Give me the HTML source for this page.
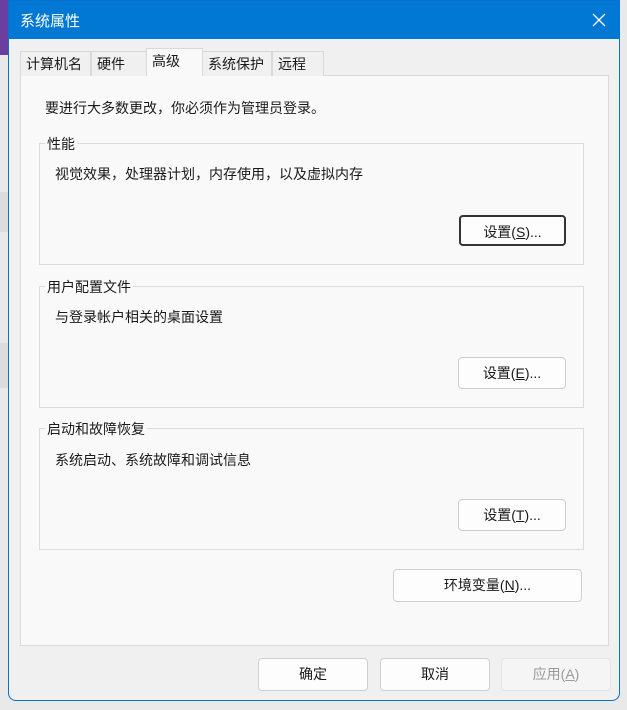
<!DOCTYPE html>
<html><head><meta charset="utf-8"><style>
*{box-sizing:border-box;margin:0;padding:0}
body{width:627px;height:710px;overflow:hidden;background:#e9e9e9;font-family:"Liberation Sans","Noto Sans CJK SC",sans-serif;font-size:14px;color:#1a1a1a;position:relative}
.a{position:absolute}
.dlg{left:8px;top:0;width:612px;height:701px;background:#f0f0f0;border:1px solid #0a6fd0;border-radius:0 0 8px 8px;overflow:hidden}
.tb{left:0;top:0;width:100%;height:38px;background:#0078d4;color:#fff;font-size:15px}
.tab{top:50px;height:25px;background:#f0f0f0;border:1px solid #d9d9d9;border-bottom:none;padding:2px 5px;font-size:14px}
.panel{left:11px;top:74px;width:589px;height:571px;background:#f9f9f9;border:1px solid #d9d9d9}
.gb{border:1px solid #dcdcdc}
.gl{background:#f9f9f9;padding:0 2px}
.btn{background:#fdfdfd;border:1px solid #cfcfcf;border-radius:4px;text-align:center;line-height:30px}
</style></head><body>
<div class="a" style="left:0;top:0;width:8px;height:55px;background:#6b3fa0"></div>
<div class="a" style="left:0;top:192px;width:8px;height:40px;background:#dcdcdc"></div>
<div class="a" style="left:0;top:343px;width:8px;height:45px;background:#dcdcdc"></div>
<div class="a dlg">
 <div class="a tb"><span class="a" style="left:11px;top:9px">系统属性</span>
  <svg class="a" style="left:583px;top:12px" width="14" height="14"><path d="M1 1L13 13M13 1L1 13" stroke="#fff" stroke-width="1.3"/></svg></div>
 <div class="a panel"></div>
 <div class="a tab" style="left:11px;width:71px">计算机名</div>
 <div class="a tab" style="left:82px;width:56px">硬件</div>
 <div class="a tab" style="left:137px;top:47px;height:28px;width:57px;background:#f9f9f9;border-color:#d9d9d9">高级</div>
 <div class="a tab" style="left:193px;width:70px">系统保护</div>
 <div class="a tab" style="left:263px;width:52px">远程</div>
 <div class="a" style="left:36px;top:97px">要进行大多数更改，你必须作为管理员登录。</div>

 <div class="a gb" style="left:30px;top:142px;width:545px;height:122px"></div>
 <div class="a gl" style="left:36px;top:133px">性能</div>
 <div class="a" style="left:46px;top:163px">视觉效果，处理器计划，内存使用，以及虚拟内存</div>
 <div class="a btn" style="left:450px;top:214px;width:107px;height:31px;border:2px solid #333">设置(<u>S</u>)...</div>

 <div class="a gb" style="left:30px;top:285px;width:545px;height:122px"></div>
 <div class="a gl" style="left:36px;top:276px">用户配置文件</div>
 <div class="a" style="left:46px;top:306px">与登录帐户相关的桌面设置</div>
 <div class="a btn" style="left:449px;top:356px;width:108px;height:32px">设置(<u>E</u>)...</div>

 <div class="a gb" style="left:30px;top:427px;width:545px;height:122px"></div>
 <div class="a gl" style="left:36px;top:418px">启动和故障恢复</div>
 <div class="a" style="left:46px;top:449px">系统启动、系统故障和调试信息</div>
 <div class="a btn" style="left:449px;top:498px;width:108px;height:32px">设置(<u>T</u>)...</div>

 <div class="a btn" style="left:384px;top:568px;width:189px;height:33px">环境变量(<u>N</u>)...</div>

 <div class="a btn" style="left:249px;top:657px;width:110px;height:33px">确定</div>
 <div class="a btn" style="left:371px;top:657px;width:110px;height:33px">取消</div>
 <div class="a btn" style="left:492px;top:657px;width:110px;height:33px;background:#f5f5f5;border-color:#e5e5e5;color:#9a9a9a">应用(<u>A</u>)</div>
</div>
</body></html>
